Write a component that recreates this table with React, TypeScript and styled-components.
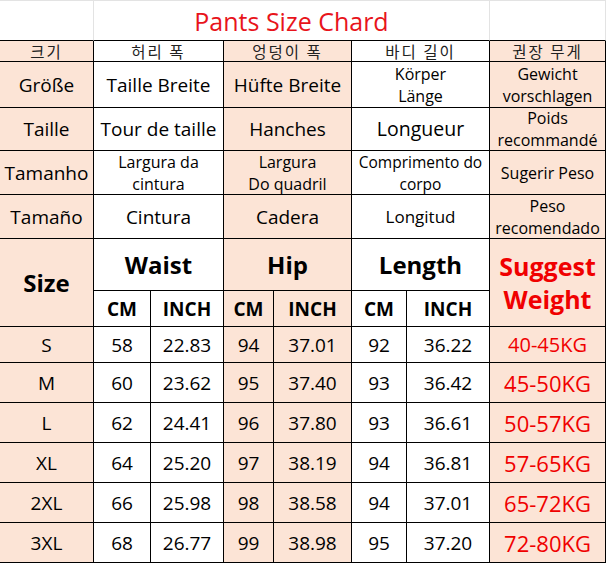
import React from "react";
import styled, { createGlobalStyle, css } from "styled-components";

const GlobalStyle = createGlobalStyle`
  html, body { margin: 0; padding: 0; background: #ffffff; }
  body { font-family: "Open Sans", "Noto Sans", "Noto Sans CJK KR", sans-serif; color: #000; }
`;

const PEACH = "#fce4d6";
const RED = "#f00000";

const Chart = styled.div`
  display: grid;
  grid-template-columns: 94px 57px 73px 50px 78px 55px 83px 116px;
  grid-template-rows: 40px 21px 46px 43px 44px 44px 52px 36px 36px repeat(5, 40px);
  width: 606px;
  border-top: 1px solid #e3e3e3;
`;

type CellProps = {
  $peach?: boolean;
  $span?: number;
  $rows?: number;
  $size?: number;
  $bold?: boolean;
  $red?: boolean;
  $lh?: number;
  $title?: boolean;
  $ko?: boolean;
};

const Cell = styled.div<CellProps>`
  box-sizing: border-box;
  display: flex;
  align-items: center;
  justify-content: center;
  text-align: center;
  background: ${(p) => (p.$peach ? PEACH : "#ffffff")};
  border-right: 1px solid #000;
  border-bottom: 1px solid #000;
  grid-column: span ${(p) => p.$span ?? 1};
  grid-row: span ${(p) => p.$rows ?? 1};
  font-size: ${(p) => p.$size ?? 19}px;
  font-weight: ${(p) => (p.$bold ? 700 : 400)};
  line-height: ${(p) => p.$lh ?? 22}px;
  color: ${(p) => (p.$red ? RED : "#000")};
  white-space: pre-line;
  min-height: 0;
  ${(p) =>
    p.$title &&
    css`
      border-right-color: #e3e3e3;
      color: #e8141b;
    `}
  ${(p) =>
    p.$ko &&
    css`
      font-family: "Noto Sans CJK KR", sans-serif;
      font-size: 15.5px;
      letter-spacing: 2px;
      line-height: 18px;
      color: #222;
    `}
`;

const peachCols = [true, false, false, true, true, false, false, true];

type Item = { text: string; size?: number; lh?: number };

const labelRows: { size: Item; waist: Item; hip: Item; length: Item; weight: Item }[] = [
  {
    size: { text: "Größe" },
    waist: { text: "Taille Breite" },
    hip: { text: "Hüfte Breite" },
    length: { text: "Körper\nLänge", size: 16 },
    weight: { text: "Gewicht\nvorschlagen", size: 16 },
  },
  {
    size: { text: "Taille" },
    waist: { text: "Tour de taille" },
    hip: { text: "Hanches" },
    length: { text: "Longueur", size: 19.5 },
    weight: { text: "Poids\nrecommandé", size: 16 },
  },
  {
    size: { text: "Tamanho" },
    waist: { text: "Largura da\ncintura", size: 16 },
    hip: { text: "Largura\nDo quadril", size: 16 },
    length: { text: "Comprimento do\ncorpo", size: 15.5 },
    weight: { text: "Sugerir Peso", size: 16 },
  },
  {
    size: { text: "Tamaño" },
    waist: { text: "Cintura" },
    hip: { text: "Cadera" },
    length: { text: "Longitud", size: 17 },
    weight: { text: "Peso\nrecomendado", size: 16 },
  },
];

const data = [
  ["S", "58", "22.83", "94", "37.01", "92", "36.22", "40-45KG"],
  ["M", "60", "23.62", "95", "37.40", "93", "36.42", "45-50KG"],
  ["L", "62", "24.41", "96", "37.80", "93", "36.61", "50-57KG"],
  ["XL", "64", "25.20", "97", "38.19", "94", "36.81", "57-65KG"],
  ["2XL", "66", "25.98", "98", "38.58", "94", "37.01", "65-72KG"],
  ["3XL", "68", "26.77", "99", "38.98", "95", "37.20", "72-80KG"],
];

export default function App() {
  return (
    <>
      <GlobalStyle />
      <Chart>
        <Cell $title />
        <Cell $title $span={6} $size={25} $lh={30}>
          Pants Size Chard
        </Cell>
        <Cell $title />

        <Cell $ko $peach>크기</Cell>
        <Cell $ko $span={2}>허리 폭</Cell>
        <Cell $ko $span={2} $peach>엉덩이 폭</Cell>
        <Cell $ko $span={2}>바디 길이</Cell>
        <Cell $ko $peach>권장 무게</Cell>

        {labelRows.map((r, i) => (
          <React.Fragment key={i}>
            <Cell $peach $size={r.size.size}>{r.size.text}</Cell>
            <Cell $span={2} $size={r.waist.size}>{r.waist.text}</Cell>
            <Cell $span={2} $peach $size={r.hip.size}>{r.hip.text}</Cell>
            <Cell $span={2} $size={r.length.size}>{r.length.text}</Cell>
            <Cell $peach $size={r.weight.size}>{r.weight.text}</Cell>
          </React.Fragment>
        ))}

        <Cell $peach $rows={2} $bold $size={24}>Size</Cell>
        <Cell $span={2} $bold $size={24}>Waist</Cell>
        <Cell $span={2} $peach $bold $size={24}>Hip</Cell>
        <Cell $span={2} $bold $size={24}>Length</Cell>
        <Cell $peach $rows={2} $bold $red $size={25} $lh={33}>
          {"Suggest\nWeight"}
        </Cell>

        <Cell $bold>CM</Cell>
        <Cell $bold>INCH</Cell>
        <Cell $peach $bold>CM</Cell>
        <Cell $peach $bold>INCH</Cell>
        <Cell $bold>CM</Cell>
        <Cell $bold>INCH</Cell>

        {data.map((row, ri) =>
          row.map((v, ci) => (
            <Cell
              key={`${ri}-${ci}`}
              $peach={peachCols[ci]}
              $red={ci === 7}
              $size={ci === 7 ? (ri === 0 ? 20 : 22) : 19}
            >
              {v}
            </Cell>
          ))
        )}
      </Chart>
    </>
  );
}
